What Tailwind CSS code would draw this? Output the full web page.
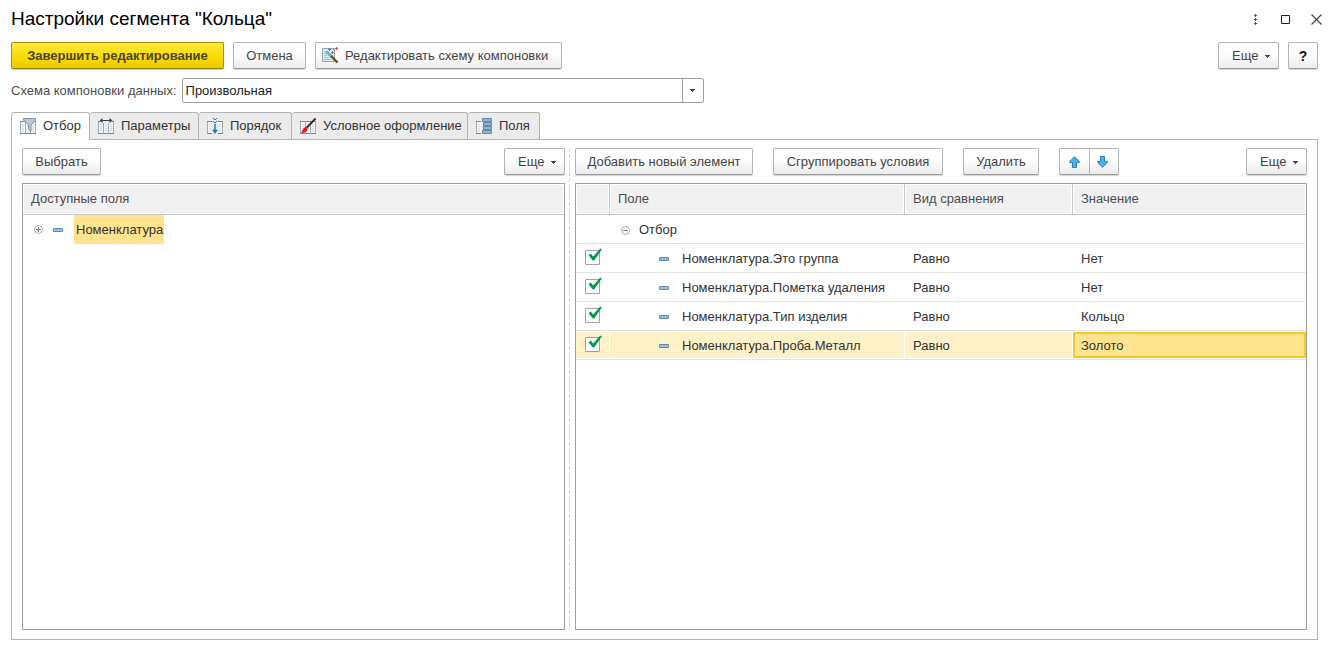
<!DOCTYPE html>
<html lang="ru">
<head>
<meta charset="utf-8">
<meta name="viewport" content="width=device-width, initial-scale=1">
<title>Настройки сегмента "Кольца"</title>
<script src="https://cdn.jsdelivr.net/npm/@tailwindcss/browser@4"></script>
</head>
<body class="bg-white font-['Liberation_Sans',Arial,sans-serif] text-[13px] leading-4 text-[#333333]">

<svg class="hidden" aria-hidden="true">
  <symbol id="caret" viewBox="0 0 5 3"><path d="M0 0h5v1H4v1H3v1H2V2H1V1H0z" fill="#444"/></symbol>
  <symbol id="dash" viewBox="0 0 10 4"><rect x=".5" y=".5" width="9" height="3" rx=".5" fill="#9fc0d8" stroke="#5c87a6"/></symbol>
  <symbol id="sheet" viewBox="0 0 16 16">
    <path d="M.5 3.500h15v12H.5z" fill="#f5f7f9" stroke="#9dadb9"/>
    <path d="M5.500 3.500v12M10.500 3.500v12" stroke="#9dadb9" fill="none"/>
    <path d="M0 15.500h5M6 15.500h4M11 15.500h5M0 3.500h16" stroke="#6f8797" fill="none"/>
    <path d="M2 6.500h2M2 8.500h2M2 10.500h2M2 12.500h2M7 6.500h2M7 8.500h2M7 10.500h2M7 12.500h2M12 6.500h2M12 8.500h2M12 10.500h2M12 12.500h2" stroke="#d3dbe1" fill="none"/>
  </symbol>
  <symbol id="tick" viewBox="0 0 14 14"><path d="M.5 7.200L2.700 5.600 5.200 8.600 12.200.6l1.600.9L6.200 12.600H4.800z" fill="#009a4e"/></symbol>
</svg>

<div class="flex min-h-screen flex-col pr-[15px] pb-2 pl-[11px]">

  <header class="flex h-[42px] items-center justify-between pb-1">
    <h1 class="text-[19px] leading-6 text-black">Настройки сегмента "Кольца"</h1>
    <div class="-mr-1 flex items-center gap-5">
      <button type="button" aria-label="Меню" class="flex h-4 w-3 items-center justify-center">
        <svg class="h-[11px] w-[3px]" viewBox="0 0 3 11"><path d="M1 0h1v1h1v1H2v1H1V2H0V1h1zM1 4h1v1h1v1H2v1H1V6H0V5h1zM1 8h1v1h1v1H2v1H1v-1H0V9h1z" fill="#555"/></svg>
      </button>
      <button type="button" aria-label="Развернуть" class="flex h-4 w-[9px] items-center justify-center">
        <svg class="h-[9px] w-[9px] shrink-0" viewBox="0 0 9 9"><path d="M.5.5h8v8h-8z" fill="none" stroke="#222"/></svg>
      </button>
      <button type="button" aria-label="Закрыть" class="flex h-4 w-3 items-center justify-center">
        <svg class="h-[11px] w-[11px] shrink-0" viewBox="0 0 11 11"><path d="M.5.5l10 10M10.500.5l-10 10" fill="none" stroke="#444" stroke-width="1.200"/></svg>
      </button>
    </div>
  </header>

  <div class="flex gap-[9px]">
    <button type="button" class="h-[27px] w-[213px] rounded-[2px] border border-[#a68f00] border-b-[#8f7b00] bg-linear-to-b from-[#ffe934] via-[#fbdd00] to-[#eacb00] font-bold text-[#4a4430] shadow-[0_1px_0_#d0d0d0]">Завершить редактирование</button>
    <button type="button" class="h-[27px] w-[73px] rounded-[2px] border border-[#b3b3b3] border-b-[#999] bg-linear-to-b from-white from-40% to-[#ebebeb] text-[#444] shadow-[0_1px_0_#d6d6d6]">Отмена</button>
    <button type="button" class="flex h-[27px] w-[247px] items-center gap-[6px] rounded-[2px] border border-[#b3b3b3] border-b-[#999] bg-linear-to-b from-white from-40% to-[#ebebeb] pl-[6px] whitespace-nowrap text-[#444] shadow-[0_1px_0_#d6d6d6]">
      <svg class="h-[17px] w-[17px] shrink-0" viewBox="0 0 17 17">
        <path d="M.5 1.500h12v13H.5z" fill="#e3ebf2" stroke="#8fa4b3"/>
        <path d="M2 4.500h4M2 6.500h3M2 8.500h3M2 10.500h5M2 12.500h7" stroke="#a9bac6" fill="none"/>
        <path d="M4.500 4.500L9.500 9.500" stroke="#5fb6ee" stroke-width="3"/>
        <path d="M9 9l6.500 6.500" stroke="#6b4a12" stroke-width="2.400"/>
        <path d="M6 2.500h3M7.500 1v3M13 1.500h3M14.500 0v3M9 5.500h3M10.500 4v3M11 2.500h1" stroke="#f04a22" fill="none"/>
      </svg>
      Редактировать схему компоновки
    </button>
    <button type="button" class="ml-auto flex h-[27px] w-[61px] items-center gap-[7px] rounded-[2px] border border-[#b3b3b3] border-b-[#999] bg-linear-to-b from-white from-40% to-[#ebebeb] pl-[13px] text-[#444] shadow-[0_1px_0_#d6d6d6]">Еще<svg class="mt-0.5 h-[3px] w-[5px]"><use href="#caret"/></svg></button>
    <button type="button" class="h-[27px] w-[30px] rounded-[2px] border border-[#b3b3b3] border-b-[#999] bg-linear-to-b from-white from-40% to-[#ebebeb] text-sm font-bold text-[#111] shadow-[0_1px_0_#d6d6d6]">?</button>
  </div>

  <div class="mt-[9px] flex items-center gap-[5px]">
    <label for="scheme" class="text-[#4d4d4d]">Схема компоновки данных:</label>
    <div class="relative w-[522px]">
      <select id="scheme" class="block h-[25px] w-full appearance-none rounded-[2px] border border-[#a0a0a0] bg-white pr-6 pl-[3px] text-[#222]"><option>Произвольная</option></select>
      <span class="pointer-events-none absolute inset-y-0 right-0 flex w-[22px] items-center justify-center border-l border-[#a0a0a0] pr-0.5"><svg class="h-[3px] w-[5px]"><use href="#caret"/></svg></span>
    </div>
  </div>

  <div role="tablist" class="mt-[9px] flex whitespace-nowrap">
    <button type="button" role="tab" aria-selected="true" class="z-10 -mb-px flex h-[28px] w-[79px] items-center gap-[7px] rounded-t-[3px] border border-b-0 border-[#b3b3b3] bg-white pb-px pl-2">
      <svg class="h-4 w-4 shrink-0" viewBox="0 0 16 16"><use href="#sheet"/><path d="M3.500.5h12v1.500l-4.500 5v6l-2.500-2V7l-5-5z" fill="#b9c8d3" stroke="#7d93a2"/></svg>Отбор</button>
    <button type="button" role="tab" aria-selected="false" class="flex h-[27px] w-[109px] items-center gap-[7px] rounded-t-[3px] border border-b-0 border-l-0 border-[#b3b3b3] bg-[#ebebeb] pl-2">
      <svg class="h-4 w-4 shrink-0" viewBox="0 0 16 16"><use href="#sheet"/><path d="M2 0h12v5H2z" fill="#ebebeb"/><path d="M1.500 2.500L4.500 0v2h7V0l3 2.500-3 2.500V3h-7v2z" fill="#2e4454"/></svg>Параметры</button>
    <button type="button" role="tab" aria-selected="false" class="flex h-[27px] w-[93px] items-center gap-[7px] rounded-t-[3px] border border-b-0 border-l-0 border-[#b3b3b3] bg-[#ebebeb] pl-2">
      <svg class="h-4 w-4 shrink-0" viewBox="0 0 16 16"><use href="#sheet"/><path d="M5 2h6v14H5z" fill="#e4edf4"/><path d="M6 .5h1M9 .5h1M7 1.500h2M6 3.500h1M9 3.500h1M7 4.500h2" stroke="#2d74a8"/><path d="M7.500 6h1v6h2L8 15.500 5.500 12h2z" fill="#2d74a8" stroke="#2d74a8" stroke-width=".5"/></svg>Порядок</button>
    <button type="button" role="tab" aria-selected="false" class="flex h-[27px] w-[176px] items-center gap-[7px] rounded-t-[3px] border border-b-0 border-l-0 border-[#b3b3b3] bg-[#ebebeb] pl-2">
      <svg class="h-4 w-4 shrink-0" viewBox="0 0 16 16"><use href="#sheet"/><path d="M15.500.5L6.500 10" stroke="#4b2a1c" stroke-width="2"/><path d="M5.500 9l2 2c-.5 2.500-2.500 4-6.500 4 1.500-1 1-4.500 4.500-6z" fill="#ee1414"/></svg>Условное оформление</button>
    <button type="button" role="tab" aria-selected="false" class="flex h-[27px] w-[72px] items-center gap-[7px] rounded-t-[3px] border border-b-0 border-l-0 border-[#b3b3b3] bg-[#ebebeb] pl-2">
      <svg class="h-4 w-4 shrink-0" viewBox="0 0 16 16"><use href="#sheet"/><path d="M5 0h11v16H5z" fill="#ebebeb"/><path d="M6.500.5h9v3h-9zM7.500 4.500h8v3h-8zM7.500 8.500h8v3h-8zM6.500 12.500h9v3h-9z" fill="#8fb4cf" stroke="#5f8aa9"/></svg>Поля</button>
  </div>

  <main role="tabpanel" class="grid flex-1 grid-cols-[543fr_10px_732fr] border border-[#b3b3b3] px-[10px] pt-2 pb-[9px]">

    <section class="flex flex-col">
      <div class="flex justify-between">
        <button type="button" class="h-[27px] w-[79px] rounded-[2px] border border-[#b3b3b3] border-b-[#999] bg-linear-to-b from-white from-40% to-[#ebebeb] text-[#444] shadow-[0_1px_0_#d6d6d6]">Выбрать</button>
        <button type="button" class="flex h-[27px] w-[61px] items-center gap-[7px] rounded-[2px] border border-[#b3b3b3] border-b-[#999] bg-linear-to-b from-white from-40% to-[#ebebeb] pl-[13px] text-[#444] shadow-[0_1px_0_#d6d6d6]">Еще<svg class="mt-0.5 h-[3px] w-[5px]"><use href="#caret"/></svg></button>
      </div>
      <div class="mt-2 flex-1 border border-[#a0a0a0]">
        <div class="h-[31px] border-b border-[#c8c8c8] bg-[#f1f1f1] px-[8px] pt-[7px] text-[#4d4d4d] shadow-[inset_0_0_0_1px_white]">Доступные поля</div>
        <ul role="tree">
          <li role="treeitem" aria-expanded="false" aria-selected="true" class="flex h-[29px] items-center pl-[11px]">
            <svg class="h-[9px] w-[9px]" viewBox="0 0 9 9"><circle cx="4.500" cy="4.500" r="4" fill="none" stroke="#a8a8a8"/><path d="M2 4.500h5M4.500 2v5" stroke="#777"/></svg>
            <svg class="ml-[10px] h-1 w-[10px]"><use href="#dash"/></svg>
            <span class="ml-[11px] flex h-full w-[90px] items-center bg-[#ffe48f] pl-[2px]">Номенклатура</span>
          </li>
        </ul>
      </div>
    </section>

    <div class="ml-1 w-px bg-[repeating-linear-gradient(to_bottom,#d4d4d4_0_4px,transparent_4px_6px)]"></div>

    <section class="flex flex-col">
      <div class="flex gap-5">
        <button type="button" class="h-[27px] w-[178px] rounded-[2px] border border-[#b3b3b3] border-b-[#999] bg-linear-to-b from-white from-40% to-[#ebebeb] text-[#444] shadow-[0_1px_0_#d6d6d6]">Добавить новый элемент</button>
        <button type="button" class="h-[27px] w-[170px] rounded-[2px] border border-[#b3b3b3] border-b-[#999] bg-linear-to-b from-white from-40% to-[#ebebeb] text-[#444] shadow-[0_1px_0_#d6d6d6]">Сгруппировать условия</button>
        <button type="button" class="h-[27px] w-[76px] rounded-[2px] border border-[#b3b3b3] border-b-[#999] bg-linear-to-b from-white from-40% to-[#ebebeb] text-[#444] shadow-[0_1px_0_#d6d6d6]">Удалить</button>
        <div class="flex">
          <button type="button" aria-label="Вверх" class="flex h-[27px] w-[31px] items-center justify-center rounded-l-[2px] border border-[#b3b3b3] border-b-[#999] bg-linear-to-b from-white from-40% to-[#ebebeb] shadow-[0_1px_0_#d6d6d6]"><svg class="h-3 w-[11px]" viewBox="0 0 11 12"><path d="M5.500.7L10.300 5.500v1H7.500v5h-4v-5H.7v-1z" fill="#47b0f0" stroke="#2b7fb5"/></svg></button>
          <button type="button" aria-label="Вниз" class="flex h-[27px] w-[29px] items-center justify-center rounded-r-[2px] border border-l-0 border-[#b3b3b3] border-b-[#999] bg-linear-to-b from-white from-40% to-[#ebebeb] pr-1 shadow-[0_1px_0_#d6d6d6]"><svg class="h-3 w-[11px]" viewBox="0 0 11 12"><path d="M5.500 11.300L.7 6.500v-1h2.800v-5h4v5h2.800v1z" fill="#47b0f0" stroke="#2b7fb5"/></svg></button>
        </div>
        <button type="button" class="ml-auto flex h-[27px] w-[61px] items-center gap-[7px] rounded-[2px] border border-[#b3b3b3] border-b-[#999] bg-linear-to-b from-white from-40% to-[#ebebeb] pl-[13px] text-[#444] shadow-[0_1px_0_#d6d6d6]">Еще<svg class="mt-0.5 h-[3px] w-[5px]"><use href="#caret"/></svg></button>
      </div>
      <div class="mt-2 flex-1 border border-[#a0a0a0]">
        <table class="w-full table-fixed border-separate border-spacing-0 text-left">
          <colgroup><col class="w-[34px]"><col class="w-[295px]"><col class="w-[168px]"><col></colgroup>
          <thead>
            <tr class="h-[31px] bg-[#f1f1f1] text-[#4d4d4d] *:border-b *:border-[#c8c8c8] *:pb-px *:font-normal *:shadow-[inset_0_0_0_1px_white]">
              <th scope="col" class="border-r" aria-label="Использование"></th>
              <th scope="col" class="border-r pl-[8px]">Поле</th>
              <th scope="col" class="border-r pl-[8px]">Вид сравнения</th>
              <th scope="col" class="pl-[8px]">Значение</th>
            </tr>
          </thead>
          <tbody class="*:h-[29px] *:*:border-b *:*:border-[#e4e4e4] *:*:p-0">
            <tr>
              <td></td>
              <td colspan="3"><div class="flex items-center pt-0.5 pl-[11px]"><svg class="h-[9px] w-[9px]" viewBox="0 0 9 9"><circle cx="4.500" cy="4.500" r="4" fill="none" stroke="#a8a8a8"/><path d="M2 4.500h5" stroke="#777"/></svg><span class="ml-[9px]">Отбор</span></div></td>
            </tr>
            <tr>
              <td class="align-top"><label class="relative mt-[6px] ml-[9px] block h-[15px] w-[15px]"><input type="checkbox" checked aria-label="Номенклатура.Это группа" class="block h-[15px] w-[15px] appearance-none rounded-[1px] border border-[#a0a0a0] bg-white"><svg class="absolute -top-0.5 left-[3px] h-[14px] w-[14px]"><use href="#tick"/></svg></label></td>
              <td><div class="flex items-center gap-[13px] pt-0.5 pl-[49px]"><svg class="h-1 w-[10px]"><use href="#dash"/></svg>Номенклатура.Это группа</div></td>
              <td><div class="pt-0.5 pl-[8px]">Равно</div></td>
              <td><div class="pt-0.5 pl-[8px]">Нет</div></td>
            </tr>
            <tr>
              <td class="align-top"><label class="relative mt-[6px] ml-[9px] block h-[15px] w-[15px]"><input type="checkbox" checked aria-label="Номенклатура.Пометка удаления" class="block h-[15px] w-[15px] appearance-none rounded-[1px] border border-[#a0a0a0] bg-white"><svg class="absolute -top-0.5 left-[3px] h-[14px] w-[14px]"><use href="#tick"/></svg></label></td>
              <td><div class="flex items-center gap-[13px] pt-0.5 pl-[49px]"><svg class="h-1 w-[10px]"><use href="#dash"/></svg>Номенклатура.Пометка удаления</div></td>
              <td><div class="pt-0.5 pl-[8px]">Равно</div></td>
              <td><div class="pt-0.5 pl-[8px]">Нет</div></td>
            </tr>
            <tr>
              <td class="align-top"><label class="relative mt-[6px] ml-[9px] block h-[15px] w-[15px]"><input type="checkbox" checked aria-label="Номенклатура.Тип изделия" class="block h-[15px] w-[15px] appearance-none rounded-[1px] border border-[#a0a0a0] bg-white"><svg class="absolute -top-0.5 left-[3px] h-[14px] w-[14px]"><use href="#tick"/></svg></label></td>
              <td><div class="flex items-center gap-[13px] pt-0.5 pl-[49px]"><svg class="h-1 w-[10px]"><use href="#dash"/></svg>Номенклатура.Тип изделия</div></td>
              <td><div class="pt-0.5 pl-[8px]">Равно</div></td>
              <td><div class="pt-0.5 pl-[8px]">Кольцо</div></td>
            </tr>
            <tr aria-selected="true" class="*:bg-[#fdf2c8] *:shadow-[inset_-1px_-1px_0_white,inset_0_1px_0_white]">
              <td class="align-top"><label class="relative mt-[6px] ml-[9px] block h-[15px] w-[15px]"><input type="checkbox" checked aria-label="Номенклатура.Проба.Металл" class="block h-[15px] w-[15px] appearance-none rounded-[1px] border border-[#a0a0a0] bg-white"><svg class="absolute -top-0.5 left-[3px] h-[14px] w-[14px]"><use href="#tick"/></svg></label></td>
              <td><div class="flex items-center gap-[13px] pt-0.5 pl-[49px]"><svg class="h-1 w-[10px]"><use href="#dash"/></svg>Номенклатура.Проба.Металл</div></td>
              <td><div class="pt-0.5 pl-[8px]">Равно</div></td>
              <td><div class="my-px flex h-[26px] items-center border-2 border-[#f9c922] bg-[#ffe48f] pt-0.5 pl-[6px]">Золото</div></td>
            </tr>
          </tbody>
        </table>
      </div>
    </section>
  </main>
</div>
</body>
</html>
